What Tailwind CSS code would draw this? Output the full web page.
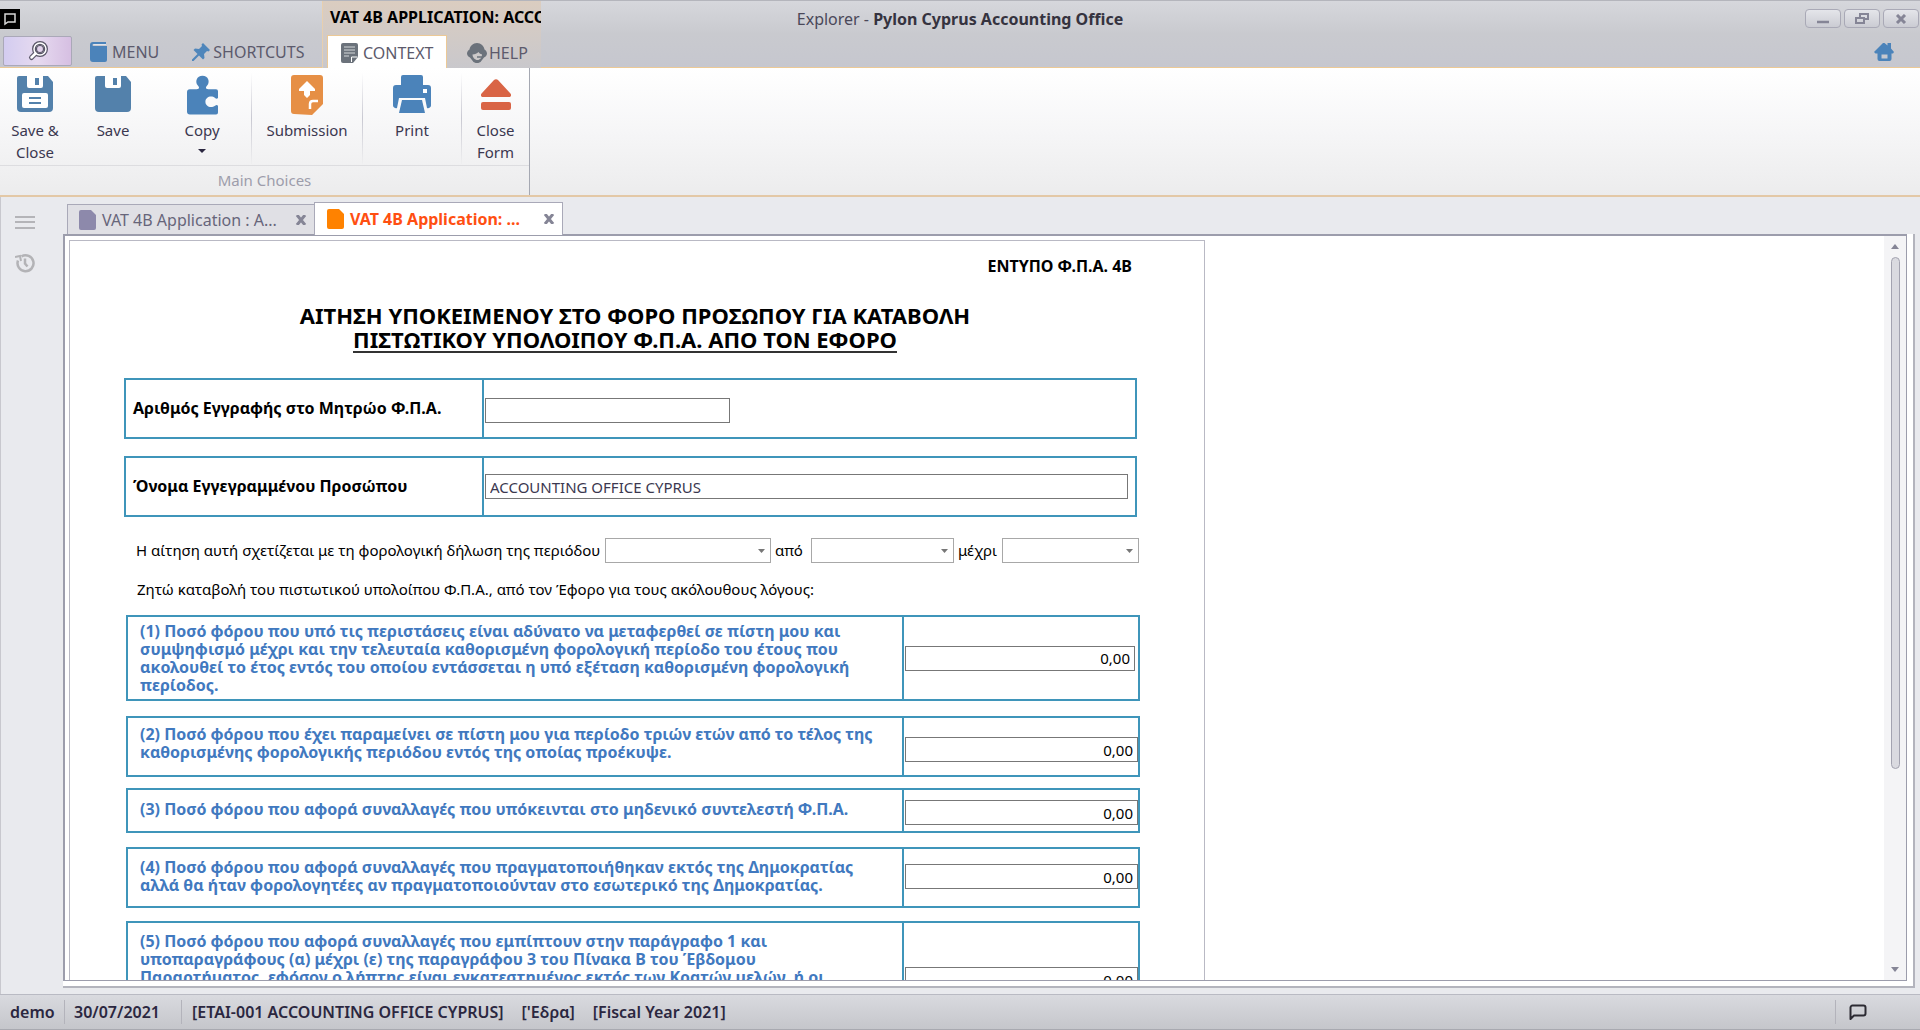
<!doctype html>
<html lang="en">

<head>
    <meta charset="UTF-8">
    <meta name="viewport" content="width=device-width, initial-scale=1.0">
    <title>Explorer - Pylon Cyprus Accounting Office</title>
    <script src="https://cdn.jsdelivr.net/npm/@tailwindcss/browser@4"></script>
</head>

<body class="flex flex-col h-screen overflow-hidden bg-[#e9eaee] font-['Noto_Sans',sans-serif] text-[15px] text-[#3b3850]">

    <!-- title bar and ribbon tabs -->
    <header class="grid grid-cols-[1fr_auto_1fr] h-[68px] shrink-0 border-t border-t-[#b4b5bc] border-b border-b-[#ecc996] bg-linear-to-b from-[#d6d7dc] via-[#c9cacf] via-50% to-[#c6c7cf]">
        <div class="flex">
            <div class="w-[322px] flex flex-col">
                <div class="h-[34px] pt-2">
                    <svg class="w-5 h-5" viewBox="0 0 20 20">
                        <rect width="20" height="20" fill="#000" />
                        <path d="M5 15V5h10v8H8z" fill="none" stroke="#d8d8d8" stroke-width="1.5" />
                    </svg>
                </div>
                <nav class="flex items-center h-8 pl-[3px]">
                    <button class="w-[69px] h-[30px] flex justify-center items-center rounded-xs border border-[#aaa8b8] bg-linear-to-r from-[#d3ccf0] via-[#e6daf0] to-[#d6bfe2]" aria-label="Search">
                        <svg class="w-[22px] h-[22px]" viewBox="0 0 22 22" fill="none" stroke="#5a5668">
                            <circle cx="13" cy="9" r="6" fill="#fff" stroke-width="4" />
                            <path d="M8.500 13.500L4.500 17.500" stroke-width="5" stroke-linecap="round" />
                            <path d="M8.500 13.500L4.500 17.500" stroke="#fff" stroke-width="2.500" stroke-linecap="round" />
                            <circle cx="13" cy="9" r="6" stroke="#fff" stroke-width="1.500" />
                            <circle cx="13" cy="9" r="3.500" fill="#e3d3ec" stroke-width="1.200" />
                        </svg>
                    </button>
                    <a href="#" class="flex items-center gap-1 ml-[17px] pt-[2px] text-base text-[#5c5a6c]">
                        <svg class="w-[19px] h-[22px]" viewBox="0 0 19 22" fill="#4b83ba">
                            <path d="M4 1h13v2H4.500a1 1 0 0 0 0 2H18v14a2 2 0 0 1-2 2H4a3 3 0 0 1-3-3V4a3 3 0 0 1 3-3z" />
                            <path d="M4.500 3.500H17" stroke="#dfe4ec" />
                        </svg>
                        MENU
                    </a>
                    <a href="#" class="flex items-center gap-[2px] ml-8 pt-[2px] text-base text-[#5c5a6c]">
                        <svg class="w-5 h-5" viewBox="0 0 20 20" fill="#4f86bb">
                            <path d="M12 1l7 7-1.500 1.500-1.500-.5-3 3 .5 4L12 17.500 8 13.500 2.500 19 1 19l0-1.500L6.500 12 2.500 8 4 6.500l4 .5 3-3-.5-1.500z" />
                        </svg>
                        SHORTCUTS
                    </a>
                </nav>
            </div>
            <div class="w-[219px] flex flex-col border-l border-l-[#e8cfae] bg-linear-to-b from-[#dbcdc0] to-[#c9c8cc]">
                <div class="h-[34px] pl-[7px] pt-1 overflow-hidden whitespace-nowrap text-base font-bold text-black">VAT 4B APPLICATION: ACCOUNTING</div>
                <nav class="flex items-stretch h-[33px] pl-1">
                    <a href="#" class="flex items-center gap-1 w-[120px] h-[33px] pl-[13px] pt-[2px] bg-white border border-b-0 border-[#ecc996] text-base text-[#5c5a6c]">
                        <svg class="w-[18px] h-5" viewBox="0 0 18 20">
                            <path d="M2 0h13a2 2 0 0 1 2 2v12l-5 6H2a2 2 0 0 1-2-2V2a2 2 0 0 1 2-2z" fill="#6b727b" />
                            <path d="M3 4h11M3 7h11M3 10h11M3 13h5" fill="none" stroke="#d5d8db" />
                            <path d="M10.500 19v-5h6" fill="none" stroke="#fff" />
                        </svg>
                        CONTEXT
                    </a>
                    <a href="#" class="flex items-center gap-[2px] pl-5 pt-[2px] text-base text-[#5c5a6c]">
                        <svg class="w-5 h-5" viewBox="0 0 20 20">
                            <path d="M10 0c4 0 7 3 7.500 6.500C19 7.500 20 9 20 10.500s-1 3-3 4L13.500 19c-2 1.500-5 1.500-7 0L3 14.500c-2-1-3-2.500-3-4s1-3 2.500-4C3 3 6 0 10 0z" fill="#6b727b" />
                            <path d="M5.500 11.500c2.500 0 4.500-1 6-2.500 1 1.500 2 2 3.500 2.500 0 3-2 5.500-4.500 5.500s-5-2.500-5-5.500z" fill="#ccc9c9" />
                            <path d="M10 14h5" stroke="#6b727b" stroke-width="1.500" />
                        </svg>
                        HELP
                    </a>
                </nav>
            </div>
        </div>
        <h1 class="pt-[7px] text-base leading-[22px] text-[#4a4859]">Explorer - <span class="font-bold text-[#35333f]">Pylon Cyprus Accounting Office</span></h1>
        <div class="flex flex-col items-end">
            <div class="flex gap-[3px] pt-2 pr-px h-[34px]">
                <button class="w-9 h-[19px] flex justify-center items-center rounded-sm border border-[#a9a9b6] bg-linear-to-b from-[#e4e5ea] to-[#cbccd3]" aria-label="Minimize">
                    <svg class="w-3 h-3" viewBox="0 0 12 12"><path d="M0 9h12" stroke="#858596" stroke-width="2.500" /></svg>
                </button>
                <button class="w-9 h-[19px] flex justify-center items-center rounded-sm border border-[#a9a9b6] bg-linear-to-b from-[#e4e5ea] to-[#cbccd3]" aria-label="Restore">
                    <svg class="w-[14px] h-3" viewBox="0 0 14 12" fill="none" stroke="#858596" stroke-width="2"><path d="M5 4V1h8v5h-3M1 5h8v5H1z" /></svg>
                </button>
                <button class="w-9 h-[19px] flex justify-center items-center rounded-sm border border-[#a9a9b6] bg-linear-to-b from-[#e4e5ea] to-[#cbccd3]" aria-label="Close">
                    <svg class="w-3 h-[10px]" viewBox="0 0 12 10"><path d="M2 1l8 8M10 1L2 9" stroke="#858596" stroke-width="3" /></svg>
                </button>
            </div>
            <a href="#" class="mt-[7px] mr-[26px]" aria-label="Home">
                <svg class="w-5 h-5" viewBox="0 0 20 20" fill="#4b83ba">
                    <path fill-rule="evenodd" d="M1 9l8-8h1.500l3 2.500V1H17v5.500l3 3.500-1 1.500h-1.500V17a2 2 0 0 1-2 2h-10a2 2 0 0 1-2-2v-5.500H1.500L0 10zM7.500 12.500v4h6v-4z" />
                </svg>
            </a>
        </div>
    </header>

    <!-- ribbon -->
    <section class="flex h-[129px] shrink-0 border-b-2 border-b-[#e3c8a6] bg-linear-to-b from-white via-[#f6f6f7] via-50% to-[#ececed]">
        <div class="flex flex-col w-[530px] border-r border-r-[#a5a8b2]">
            <div class="flex h-[100px] items-start leading-[22px]">
                <button class="flex flex-col items-center w-[70px] pt-2">
                    <svg class="w-9 h-9 mb-[7px]" viewBox="0 0 36 36">
                        <path d="M2 0h29l5 6v26a4 4 0 0 1-4 4H4a4 4 0 0 1-4-4V2a2 2 0 0 1 2-2z" fill="#5381ab" />
                        <path d="M10 0h16v10a2 2 0 0 1-2 2H12a2 2 0 0 1-2-2z" fill="#fff" />
                        <path d="M18 2h4v7h-4z" fill="#5381ab" />
                        <rect x="5" y="17" width="26" height="15" rx="2" fill="#fff" />
                        <path d="M12 22h12M12 27h12" stroke="#5381ab" stroke-width="2" />
                    </svg>
                    <span>Save &amp;<br>Close</span>
                </button>
                <button class="flex flex-col items-center w-[86px] pt-2">
                    <svg class="w-9 h-9 mb-[7px]" viewBox="0 0 36 36">
                        <path d="M2 0h29l5 6v26a4 4 0 0 1-4 4H4a4 4 0 0 1-4-4V2a2 2 0 0 1 2-2z" fill="#5381ab" />
                        <path d="M10 0h16v10a2 2 0 0 1-2 2H12a2 2 0 0 1-2-2z" fill="#fff" />
                        <path d="M18 2h4v7h-4z" fill="#5381ab" />
                    </svg>
                    <span>Save</span>
                </button>
                <button class="flex flex-col items-center w-[92px] pt-[7px]">
                    <svg class="w-[31px] h-10 mb-1" viewBox="0 0 32 40">
                        <path d="M3 14h7c3 0 3-2 1-4-3-4-1-10 5-10s8 6 5 10c-2 2-2 4 1 4h8a2 2 0 0 1 2 2v7c-1 1-2 1-3 0-4-3-10-1-10 4s6 7 10 4c1-1 2-1 3 0v7a2 2 0 0 1-2 2H3a3 3 0 0 1-3-3V17a3 3 0 0 1 3-3z" fill="#4b83ba" />
                    </svg>
                    <span>Copy</span>
                    <svg class="w-2 h-1 mt-2" viewBox="0 0 8 4"><path d="M0 0h8L4 4z" fill="#2b2740" /></svg>
                </button>
                <span class="w-px h-[92px] ml-[3px] mt-1 bg-linear-to-b from-white via-[#c9c9d2] to-[#efeff0]"></span>
                <button class="flex flex-col items-center w-[110px] pt-[7px]">
                    <svg class="w-8 h-10 mb-1" viewBox="0 0 32 40">
                        <path d="M3 0h26a3 3 0 0 1 3 3v26L21 40l-18-1a3 3 0 0 1-3-3V3a3 3 0 0 1 3-3z" fill="#e68f45" />
                        <path d="M16 6l8 8v2h-5v4l-3 3-3-3v-4H8v-2z" fill="#fff" />
                        <path d="M19 34v-5c0-2 1-3 3-3h5" fill="none" stroke="#fff" stroke-width="2.500" />
                    </svg>
                    <span>Submission</span>
                </button>
                <span class="w-px h-[92px] mt-1 bg-linear-to-b from-white via-[#c9c9d2] to-[#efeff0]"></span>
                <button class="flex flex-col items-center w-[98px] pt-[7px]">
                    <svg class="w-[38px] h-10 mb-1" viewBox="0 0 38 40">
                        <path d="M10 0h18a2 2 0 0 1 2 2v8h5a3 3 0 0 1 3 3v17a3 3 0 0 1-4 3l-2-10H6L4 33a3 3 0 0 1-4-3V13a3 3 0 0 1 3-3h5V2a2 2 0 0 1 2-2z" fill="#4b83ba" />
                        <rect x="30" y="14" width="4" height="4" fill="#fff" />
                        <path d="M9 25h20l3 13H6z" fill="#4b83ba" />
                    </svg>
                    <span>Print</span>
                </button>
                <span class="w-px h-[92px] mt-1 bg-linear-to-b from-white via-[#c9c9d2] to-[#efeff0]"></span>
                <button class="flex flex-col items-center flex-1 pt-2">
                    <svg class="w-[30px] h-9 mb-[7px]" viewBox="0 0 30 36" fill="#d96445">
                        <path d="M13 4c1-1 3-1 4 0l12 13c2 2 1 4-1 4H2c-2 0-3-2-1-4z" />
                        <rect y="26" width="30" height="8" rx="2" />
                    </svg>
                    <span>Close<br>Form</span>
                </button>
            </div>
            <div class="flex-1 border-t border-t-[#dddde0] text-center leading-[29px] text-[#9d9dab]">Main Choices</div>
        </div>
    </section>

    <!-- workspace -->
    <main class="flex flex-1 min-h-0">
        <aside class="w-[63px] pl-[14px] pt-[18px] border-l border-l-[#c8c8ce] flex flex-col gap-6">
            <button class="w-5 h-[14px]" aria-label="Navigation">
                <svg class="w-5 h-[14px]" viewBox="0 0 20 14"><path d="M0 2h20M0 7h20M0 13h20" stroke="#a3a3a6" stroke-width="1.500" /></svg>
            </button>
            <button class="w-5 h-5" aria-label="History">
                <svg class="w-5 h-5" viewBox="0 0 20 20" fill="none" stroke="#b3b3b6" stroke-width="2.500">
                    <path d="M6.500 3.300A8 8 0 1 1 3 7.500M10 5.500v5l2.500 3" />
                    <path d="M0 4l5-1 1 5" stroke-width="2" />
                </svg>
            </button>
        </aside>

        <div class="flex-1 min-w-0 flex flex-col pr-[5px] pb-[6px]">
            <div class="flex items-end h-[37px] pl-1">
                <div class="flex items-center w-[247px] h-[30px] pl-[11px] pr-[7px] border border-b-0 border-r-0 border-[#a9a9b8] bg-[#e0e0e5]">
                    <svg class="w-[17px] h-5 shrink-0" viewBox="0 0 17 20"><path d="M2 0h10l5 5v13a2 2 0 0 1-2 2H2a2 2 0 0 1-2-2V2a2 2 0 0 1 2-2z" fill="#8d89ab" /></svg>
                    <a href="#" class="flex-1 pl-[6px] pt-px text-base leading-5 text-[#67657a]">VAT 4B Application : A...</a>
                    <button aria-label="Close tab"><svg class="w-3 h-[10px]" viewBox="0 0 12 10"><path d="M2 0l8 10M10 0L2 10" stroke="#858596" stroke-width="3" /></svg></button>
                </div>
                <div class="relative z-10 flex items-center w-[249px] h-[33px] -mb-px pl-3 pr-[7px] border border-b-0 border-[#a9a9b8] bg-white">
                    <svg class="w-[17px] h-5 shrink-0" viewBox="0 0 17 20"><path d="M2 0h10l5 5v13a2 2 0 0 1-2 2H2a2 2 0 0 1-2-2V2a2 2 0 0 1 2-2z" fill="#ff8200" /></svg>
                    <a href="#" class="flex-1 pl-[6px] text-base leading-5 font-bold text-[#ff4f12]">VAT 4B Application: ...</a>
                    <button aria-label="Close tab"><svg class="w-3 h-[10px]" viewBox="0 0 12 10"><path d="M2 0l8 10M10 0L2 10" stroke="#858596" stroke-width="3" /></svg></button>
                </div>
            </div>

            <div class="flex-1 min-h-0 pr-[6px] pb-[5px] bg-white border-r-2 border-b-2 border-[#b3b4bd]">
                <div class="flex h-full border-2 border-r border-b border-[#9c9dac] bg-white">
                    <div class="flex-1 min-w-0 overflow-hidden pl-1 pt-1">
                        <form class="w-full max-w-[1136px] min-h-full pl-[54px] pr-16 pt-[13px] border border-b-0 border-[#b9b9c4] text-black">
                            <p class="pr-2 text-right text-base leading-6 font-bold">ΕΝΤΥΠΟ Φ.Π.Α. 4Β</p>
                            <h2 class="mt-[25px] pl-[6px] text-center text-[22px] leading-6 font-bold">ΑΙΤΗΣΗ ΥΠΟΚΕΙΜΕΝΟΥ ΣΤΟ ΦΟΡΟ ΠΡΟΣΩΠΟΥ ΓΙΑ ΚΑΤΑΒΟΛΗ<br><span class="inline-block mr-5 border-b-2 border-[#333]">ΠΙΣΤΩΤΙΚΟΥ ΥΠΟΛΟΙΠΟΥ Φ.Π.Α. ΑΠΟ ΤΟΝ ΕΦΟΡΟ</span></h2>

                            <div class="grid grid-cols-[358px_1fr] h-[61px] mt-[25px] mr-[3px] border-2 border-[#3f95ba]">
                                <label for="vat-number" class="flex items-center pl-[7px] pb-[2px] border-r-2 border-[#3f95ba] text-base font-bold">Αριθμός Εγγραφής στο Μητρώο Φ.Π.Α.</label>
                                <div class="flex items-center pt-1 pl-px">
                                    <input id="vat-number" type="text" class="w-[245px] h-[25px] px-1 border border-[#777]">
                                </div>
                            </div>
                            <div class="grid grid-cols-[358px_1fr] h-[61px] mt-[17px] mr-[3px] border-2 border-[#3f95ba]">
                                <label for="person-name" class="flex items-center pl-[7px] pb-[2px] border-r-2 border-[#3f95ba] text-base font-bold">Όνομα Εγγεγραμμένου Προσώπου</label>
                                <div class="flex items-center pl-px pr-[7px]">
                                    <input id="person-name" type="text" value="ACCOUNTING OFFICE CYPRUS" class="w-full h-[25px] px-1 border border-[#777] text-[#3b3850]">
                                </div>
                            </div>

                            <div class="flex items-center h-[25px] mt-[21px] pl-3 pr-px">
                                <label for="period" class="whitespace-nowrap">Η αίτηση αυτή σχετίζεται με τη φορολογική δήλωση της περιόδου</label>
                                <div class="relative ml-auto w-[166px]">
                                    <select id="period" class="block appearance-none w-full h-[25px] px-1 border border-[#a8a8a8]"><option></option></select>
                                    <svg class="absolute right-[6px] top-[11px] w-[7px] h-1 pointer-events-none" viewBox="0 0 7 4"><path d="M0 0h7L3.500 4z" fill="#777" /></svg>
                                </div>
                                <label for="from" class="w-10 pl-1">από</label>
                                <div class="relative w-[143px]">
                                    <select id="from" class="block appearance-none w-full h-[25px] px-1 border border-[#a8a8a8]"><option></option></select>
                                    <svg class="absolute right-[6px] top-[11px] w-[7px] h-1 pointer-events-none" viewBox="0 0 7 4"><path d="M0 0h7L3.500 4z" fill="#777" /></svg>
                                </div>
                                <label for="to" class="w-12 pl-1">μέχρι</label>
                                <div class="relative w-[137px]">
                                    <select id="to" class="block appearance-none w-full h-[25px] px-1 border border-[#a8a8a8]"><option></option></select>
                                    <svg class="absolute right-[6px] top-[11px] w-[7px] h-1 pointer-events-none" viewBox="0 0 7 4"><path d="M0 0h7L3.500 4z" fill="#777" /></svg>
                                </div>
                            </div>
                            <p class="mt-[15px] pl-[13px] leading-[22px]">Ζητώ καταβολή του πιστωτικού υπολοίπου Φ.Π.Α., από τον Έφορο για τους ακόλουθους λόγους:</p>

                            <div class="grid grid-cols-[1fr_234px] h-[86px] mt-[15px] ml-[2px] border-2 border-[#3f95ba]">
                                <label for="amount-1" class="flex items-center pl-3 border-r-2 border-[#3f95ba] text-base leading-[18px] font-bold text-[#4179bf]">(1) Ποσό φόρου που υπό τις περιστάσεις είναι αδύνατο να μεταφερθεί σε πίστη μου και<br>συμψηφισμό μέχρι και την τελευταία καθορισμένη φορολογική περίοδο του έτους που<br>ακολουθεί το έτος εντός του οποίου εντάσσεται η υπό εξέταση καθορισμένη φορολογική<br>περίοδος.</label>
                                <div class="flex items-center pl-px pr-[3px]">
                                    <input id="amount-1" type="text" value="0,00" class="w-full h-[25px] px-1 border border-[#777] text-right">
                                </div>
                            </div>
                            <div class="grid grid-cols-[1fr_234px] h-[61px] mt-[15px] ml-[2px] border-2 border-[#3f95ba]">
                                <label for="amount-2" class="flex items-center pl-3 pb-2 border-r-2 border-[#3f95ba] text-base leading-[18px] font-bold text-[#4179bf]">(2) Ποσό φόρου που έχει παραμείνει σε πίστη μου για περίοδο τριών ετών από το τέλος της<br>καθορισμένης φορολογικής περιόδου εντός της οποίας προέκυψε.</label>
                                <div class="flex items-center pt-[6px] pl-px">
                                    <input id="amount-2" type="text" value="0,00" class="w-full h-[25px] px-1 border border-[#777] text-right">
                                </div>
                            </div>
                            <div class="grid grid-cols-[1fr_234px] h-[45px] mt-[11px] ml-[2px] border-2 border-[#3f95ba]">
                                <label for="amount-3" class="flex items-center pl-3 pb-1 border-r-2 border-[#3f95ba] text-base leading-[18px] font-bold text-[#4179bf]">(3) Ποσό φόρου που αφορά συναλλαγές που υπόκεινται στο μηδενικό συντελεστή Φ.Π.Α.</label>
                                <div class="flex items-center pt-1 pl-px">
                                    <input id="amount-3" type="text" value="0,00" class="w-full h-[25px] px-1 border border-[#777] text-right">
                                </div>
                            </div>
                            <div class="grid grid-cols-[1fr_234px] h-[61px] mt-[14px] ml-[2px] border-2 border-[#3f95ba]">
                                <label for="amount-4" class="flex items-center pl-3 pb-1 border-r-2 border-[#3f95ba] text-base leading-[18px] font-bold text-[#4179bf]">(4) Ποσό φόρου που αφορά συναλλαγές που πραγματοποιήθηκαν εκτός της Δημοκρατίας<br>αλλά θα ήταν φορολογητέες αν πραγματοποιούνταν στο εσωτερικό της Δημοκρατίας.</label>
                                <div class="flex items-center pb-[2px] pl-px">
                                    <input id="amount-4" type="text" value="0,00" class="w-full h-[25px] px-1 border border-[#777] text-right">
                                </div>
                            </div>
                            <div class="grid grid-cols-[1fr_234px] h-[119px] mt-[13px] ml-[2px] border-2 border-[#3f95ba]">
                                <label for="amount-5" class="pl-3 pt-[9px] border-r-2 border-[#3f95ba] text-base leading-[18px] font-bold text-[#4179bf]">(5) Ποσό φόρου που αφορά συναλλαγές που εμπίπτουν στην παράγραφο 1 και<br>υποπαραγράφους (α) μέχρι (ε) της παραγράφου 3 του Πίνακα Β του Έβδομου<br>Παραρτήματος, εφόσον ο λήπτης είναι εγκατεστημένος εκτός των Κρατών μελών, ή οι</label>
                                <div class="flex items-center pb-[2px] pl-px">
                                    <input id="amount-5" type="text" value="0,00" class="w-full h-[25px] px-1 border border-[#777] text-right">
                                </div>
                            </div>
                        </form>
                    </div>
                    <div class="flex flex-col items-center w-[22px] bg-[#f4f4f6]">
                        <svg class="w-2 h-[5px] my-2 shrink-0" viewBox="0 0 8 5"><path d="M0 5h8L4 0z" fill="#858596" /></svg>
                        <div class="flex-1 min-h-0">
                            <div class="w-[9px] h-[73%] rounded-full border border-[#a3a3b0] bg-[#dadae0]"></div>
                        </div>
                        <svg class="w-2 h-[5px] my-2 shrink-0" viewBox="0 0 8 5"><path d="M0 0h8L4 5z" fill="#858596" /></svg>
                    </div>
                </div>
            </div>
        </div>
    </main>

    <!-- status bar -->
    <footer class="flex items-center h-9 shrink-0 px-[10px] border-t border-t-[#b9bac3] border-b border-b-[#a8a9b0] bg-linear-to-b from-[#d9dadf] to-[#c5c6cb] text-base font-semibold text-[#2b2740]">
        <span class="w-[54px]">demo</span>
        <span class="w-px h-6 bg-[#b3b3bb]"></span>
        <span class="w-[116px] pl-[9px]">30/07/2021</span>
        <span class="w-px h-6 bg-[#b3b3bb]"></span>
        <span class="pl-[10px]">[ETAI-001 ACCOUNTING OFFICE CYPRUS]</span>
        <span class="pl-[18px]">['Εδρα]</span>
        <span class="pl-[18px]">[Fiscal Year 2021]</span>
        <span class="w-px h-6 ml-auto mr-[13px] bg-[#b3b3bb]"></span>
        <button class="mr-[43px]" aria-label="Messages">
            <svg class="w-[18px] h-4" viewBox="0 0 18 16"><path d="M1.500 15V3.500a2 2 0 0 1 2-2h11a2 2 0 0 1 2 2v6a2 2 0 0 1-2 2H5z" fill="none" stroke="#2c2b33" stroke-width="2" stroke-linejoin="round" /></svg>
        </button>
    </footer>
</body>

</html>
